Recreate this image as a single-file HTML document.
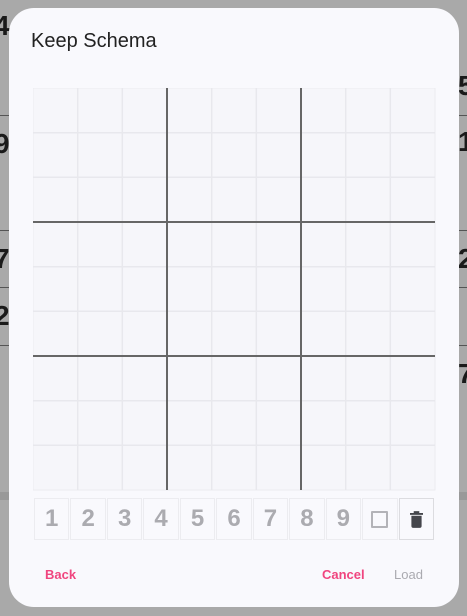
<!DOCTYPE html>
<html><head><style>
body{margin:0;width:467px;height:616px;background:#a9a9a9;position:relative;overflow:hidden;font-family:"Liberation Sans",sans-serif}
.bg{position:absolute;font-weight:bold;color:#1a1a1a;font-size:28px}
.hl{position:absolute;height:1px;background:#555}
.dlg{position:absolute;left:9px;top:8px;width:450px;height:599px;background:#f9f9fd;border-radius:25px}
.title{position:absolute;left:22px;top:22px;font-size:20px;color:#222}
svg{position:absolute;left:24px;top:80px}
.btns{position:absolute;left:25px;top:490px;width:400px;height:42px;display:flex;gap:1px}
.b{flex:1;border:1px solid #ececf0;box-sizing:border-box;display:flex;align-items:center;justify-content:center;font-size:24px;font-weight:bold;color:#ababb0}
.act{position:absolute;top:559px;font-size:13px;font-weight:bold}
</style></head><body>
<div class="bg" style="left:-6px;top:10px">4</div>
<div class="bg" style="left:-6px;top:128px">9</div>
<div class="bg" style="left:-6px;top:243px">7</div>
<div class="bg" style="left:-6px;top:300px">2</div>
<div class="bg" style="left:458px;top:70px">5</div>
<div class="bg" style="left:458px;top:126px">1</div>
<div class="bg" style="left:458px;top:243px">2</div>
<div class="bg" style="left:458px;top:358px">7</div>
<div class="hl" style="left:0;top:115px;width:467px"></div>
<div class="hl" style="left:0;top:287px;width:467px"></div>
<div class="hl" style="left:0;top:230px;width:467px"></div>
<div class="hl" style="left:0;top:345px;width:467px"></div>
<div style="position:absolute;left:0;top:492px;width:467px;height:8px;background:#999"></div>
<div class="dlg">
<div class="title">Keep Schema</div>
<svg width="403" height="403" viewBox="0 0 403 403">
<rect x="0" y="0" width="402" height="402" fill="#f6f6fa" stroke="#ececf0"/>
<g stroke="#e8e8ed" stroke-width="1.5">
<line x1="44.7" y1="0" x2="44.7" y2="402"/><line x1="89.3" y1="0" x2="89.3" y2="402"/>
<line x1="178.7" y1="0" x2="178.7" y2="402"/><line x1="223.3" y1="0" x2="223.3" y2="402"/>
<line x1="312.7" y1="0" x2="312.7" y2="402"/><line x1="357.3" y1="0" x2="357.3" y2="402"/>
<line y1="44.7" x1="0" y2="44.7" x2="402"/><line y1="89.3" x1="0" y2="89.3" x2="402"/>
<line y1="178.7" x1="0" y2="178.7" x2="402"/><line y1="223.3" x1="0" y2="223.3" x2="402"/>
<line y1="312.7" x1="0" y2="312.7" x2="402"/><line y1="357.3" x1="0" y2="357.3" x2="402"/>
</g>
<g stroke="#666" stroke-width="2">
<line x1="134" y1="0" x2="134" y2="402"/><line x1="268" y1="0" x2="268" y2="402"/>
<line y1="134" x1="0" y2="134" x2="402"/><line y1="268" x1="0" y2="268" x2="402"/>
</g>
</svg>
<div class="btns">
<div class="b">1</div><div class="b">2</div><div class="b">3</div><div class="b">4</div><div class="b">5</div><div class="b">6</div><div class="b">7</div><div class="b">8</div><div class="b">9</div>
<div class="b"><div style="width:13px;height:13px;border:2px solid #b3b3b8;border-radius:1px"></div></div>
<div class="b" style="border-color:#dcdce0"><svg style="position:static" width="13" height="17" viewBox="0 0 14 18"><rect x="0" y="2" width="14" height="2" fill="#45464c"/><rect x="4" y="0" width="6" height="3" fill="#45464c"/><path d="M1.5 5H12.5V16Q12.5 18 10.5 18H3.5Q1.5 18 1.5 16Z" fill="#45464c"/></svg></div>
</div>
<div class="act" style="left:36px;color:#f0457f">Back</div>
<div class="act" style="left:313px;color:#f0457f">Cancel</div>
<div class="act" style="left:385px;color:#aaaab0;font-weight:normal">Load</div>
</div>
</body></html>
